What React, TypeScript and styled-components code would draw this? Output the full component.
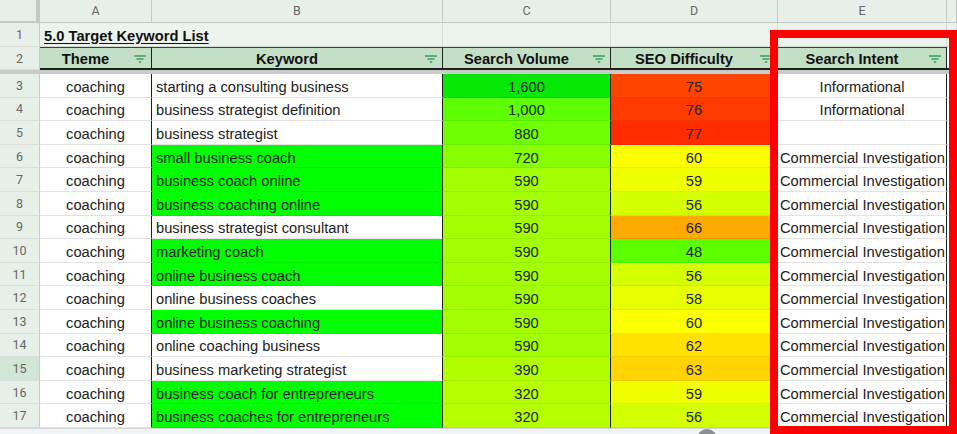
import React from 'react';
import styled, { createGlobalStyle } from 'styled-components';

const GlobalStyle = createGlobalStyle`
  html, body { margin: 0; padding: 0; background: #fff; }
  body { width: 957px; height: 434px; overflow: hidden; font-family: "Liberation Sans", Arial, sans-serif; }
  #root { width: 957px; height: 434px; }
`;

const COLS = '40px 112px 291px 168px 167px 169px 1fr';
const HEAD_BG = '#e7f0e8';
const HEAD_LINE = '#c5cec6';
const DARK = '#1f1f1f';

const Sheet = styled.div`
  position: relative;
  width: 957px;
  height: 434px;
  overflow: hidden;
  background: #fff;
  display: flex;
  flex-direction: column;
`;

const Row = styled.div<{ $h: number }>`
  display: grid;
  grid-template-columns: ${COLS};
  height: ${(p) => p.$h}px;
  flex: none;
`;

const Corner = styled.div`
  background: ${HEAD_BG};
  border-right: 4px solid #c3c8c4;
  border-bottom: 2px solid #c3c8c4;
  box-sizing: border-box;
`;

const ColLetter = styled.div`
  background: ${HEAD_BG};
  border-right: 1px solid ${HEAD_LINE};
  border-bottom: 1px solid #bfc8c0;
  box-sizing: border-box;
  display: flex;
  align-items: center;
  justify-content: center;
  padding-bottom: 2px;
  font-family: Roboto, "Liberation Sans", Arial, sans-serif;
  font-size: 12.5px;
  color: #666;
`;

const RowNum = styled.div<{ $active?: boolean }>`
  background: ${(p) => (p.$active ? '#d1e6d5' : HEAD_BG)};
  border-right: 1px solid ${HEAD_LINE};
  border-bottom: 1px solid #d6ded7;
  box-sizing: border-box;
  display: flex;
  align-items: center;
  justify-content: center;
  font-family: Roboto, "Liberation Sans", Arial, sans-serif;
  font-size: 12.5px;
  color: #666;
`;

const TitleCell = styled.div<{ $span?: number }>`
  grid-column: span ${(p) => p.$span ?? 1};
  background: #ebf3ec;
  border-right: 1px solid #d3dbd4;
  border-bottom: 1px solid #d3dbd4;
  box-sizing: border-box;
  display: flex;
  align-items: center;
  padding: 2px 4px 0;
  font-size: 14.7px;
  font-weight: bold;
  color: #111;
  white-space: nowrap;
`;

const Underlined = styled.span`
  text-decoration: underline;
  text-underline-offset: 2px;
`;

const HeaderCell = styled.div<{ $plain?: boolean }>`
  background: ${(p) => (p.$plain ? '#fff' : '#c3e0c6')};
  border-top: 1px solid ${(p) => (p.$plain ? '#e2e2e2' : '#36443a')};
  border-right: ${(p) => (p.$plain ? '1px solid #e2e2e2' : `1.5px solid ${DARK}`)};
  border-bottom: 2px solid ${DARK};
  box-sizing: border-box;
  display: flex;
  align-items: center;
  padding-top: 2px;
  font-size: 14.7px;
  font-weight: bold;
  color: #111;
`;

const HeaderLabel = styled.span`
  flex: 1;
  text-align: center;
  padding-left: 2px;
  white-space: nowrap;
`;

const FilterSlot = styled.span`
  width: 22px;
  display: flex;
  align-items: center;
  justify-content: center;
  flex: none;
`;

const FrozenBar = styled.div`
  height: 4px;
  flex: none;
  background: #c8ccc9;
`;

const Cell = styled.div<{ $bg?: string; $align?: 'left' | 'center'; $dark?: boolean; $pad?: number }>`
  background: ${(p) => p.$bg ?? '#fff'};
  border-right: 1px solid ${(p) => (p.$dark ? DARK : '#e2e2e2')};
  border-bottom: 1px solid ${(p) => (p.$bg ? 'rgba(0,0,0,0.07)' : '#e2e2e2')};
  box-sizing: border-box;
  display: flex;
  align-items: center;
  justify-content: ${(p) => (p.$align === 'left' ? 'flex-start' : 'center')};
  padding: 3px 2px 0 ${(p) => p.$pad ?? 2}px;
  font-size: 14.7px;
  color: #222;
  white-space: nowrap;
  overflow: hidden;
`;

const BottomBar = styled.div`
  flex: 1;
  background: #f1f3f4;
  border-top: 1px solid #d5d8db;
`;

const RedFrame = styled.div`
  position: absolute;
  left: 770px;
  top: 30px;
  width: 187px;
  height: 404px;
  box-sizing: border-box;
  border: 8px solid #ff0000;
  pointer-events: none;
`;

const DockPeek = styled.svg`
  position: absolute;
  left: 690px;
  top: 428px;
`;

const FilterIcon = () => (
  <svg width="12" height="8" viewBox="0 0 12 8">
    <path d="M0 1h12M2.5 4h7M4.8 7h2.4" stroke="#3a9e5e" strokeWidth="1.3" fill="none" />
  </svg>
);

type DataRow = {
  n: number;
  kw: string;
  kwGreen: boolean;
  vol: string;
  volBg: string;
  seo: string;
  seoBg: string;
  intent: 'Informational' | 'Commercial Investigation' | '';
};

const CI = 'Commercial Investigation' as const;

const rows: DataRow[] = [
  { n: 3, kw: 'starting a consulting business', kwGreen: false, vol: '1,600', volBg: '#06e806', seo: '75', seoBg: '#ff4400', intent: 'Informational' },
  { n: 4, kw: 'business strategist definition', kwGreen: false, vol: '1,000', volBg: '#5eff00', seo: '76', seoBg: '#ff3a00', intent: 'Informational' },
  { n: 5, kw: 'business strategist', kwGreen: false, vol: '880', volBg: '#6eff00', seo: '77', seoBg: '#ff2c00', intent: '' },
  { n: 6, kw: 'small business coach', kwGreen: true, vol: '720', volBg: '#88ff00', seo: '60', seoBg: '#fbff00', intent: CI },
  { n: 7, kw: 'business coach online', kwGreen: true, vol: '590', volBg: '#a3ff00', seo: '59', seoBg: '#f0ff00', intent: CI },
  { n: 8, kw: 'business coaching online', kwGreen: true, vol: '590', volBg: '#a3ff00', seo: '56', seoBg: '#d4ff00', intent: CI },
  { n: 9, kw: 'business strategist consultant', kwGreen: false, vol: '590', volBg: '#a3ff00', seo: '66', seoBg: '#ffaa00', intent: CI },
  { n: 10, kw: 'marketing coach', kwGreen: true, vol: '590', volBg: '#a3ff00', seo: '48', seoBg: '#5cff00', intent: CI },
  { n: 11, kw: 'online business coach', kwGreen: true, vol: '590', volBg: '#a3ff00', seo: '56', seoBg: '#d4ff00', intent: CI },
  { n: 12, kw: 'online business coaches', kwGreen: false, vol: '590', volBg: '#a3ff00', seo: '58', seoBg: '#e8ff00', intent: CI },
  { n: 13, kw: 'online business coaching', kwGreen: true, vol: '590', volBg: '#a3ff00', seo: '60', seoBg: '#fbff00', intent: CI },
  { n: 14, kw: 'online coaching business', kwGreen: false, vol: '590', volBg: '#a3ff00', seo: '62', seoBg: '#ffe200', intent: CI },
  { n: 15, kw: 'business marketing strategist', kwGreen: false, vol: '390', volBg: '#b0ff00', seo: '63', seoBg: '#ffd400', intent: CI },
  { n: 16, kw: 'business coach for entrepreneurs', kwGreen: true, vol: '320', volBg: '#b5ff00', seo: '59', seoBg: '#f0ff00', intent: CI },
  { n: 17, kw: 'business coaches for entrepreneurs', kwGreen: true, vol: '320', volBg: '#b5ff00', seo: '56', seoBg: '#d4ff00', intent: CI },
];

const headers = ['Theme', 'Keyword', 'Search Volume', 'SEO Difficulty', 'Search Intent'];

export default function App() {
  return (
    <>
      <GlobalStyle />
      <Sheet>
        <Row $h={23}>
          <Corner />
          {['A', 'B', 'C', 'D', 'E', ''].map((l, i) => (
            <ColLetter key={i}>{l}</ColLetter>
          ))}
        </Row>
        <Row $h={24}>
          <RowNum>1</RowNum>
          <TitleCell $span={2}>
            <Underlined>5.0 Target Keyword List</Underlined>
          </TitleCell>
          <TitleCell />
          <TitleCell />
          <TitleCell />
          <TitleCell />
        </Row>
        <Row $h={23}>
          <RowNum>2</RowNum>
          {headers.map((h) => (
            <HeaderCell key={h}>
              <HeaderLabel>{h}</HeaderLabel>
              <FilterSlot>
                <FilterIcon />
              </FilterSlot>
            </HeaderCell>
          ))}
          <HeaderCell $plain />
        </Row>
        <FrozenBar />
        {rows.map((r) => (
          <Row $h={23.6} key={r.n}>
            <RowNum $active={r.n === 15}>{r.n}</RowNum>
            <Cell $dark>coaching</Cell>
            <Cell $dark $align="left" $pad={4} $bg={r.kwGreen ? '#00ff00' : undefined}>
              {r.kw}
            </Cell>
            <Cell $dark $bg={r.volBg}>{r.vol}</Cell>
            <Cell $dark $bg={r.seoBg}>{r.seo}</Cell>
            <Cell $dark $align={r.intent === CI ? 'left' : 'center'}>
              {r.intent}
            </Cell>
            <Cell />
          </Row>
        ))}
        <BottomBar />
        <DockPeek width="240" height="6" viewBox="0 0 240 6">
          <circle cx="17" cy="11" r="10" fill="#8a8d90" />
        </DockPeek>
        <RedFrame />
      </Sheet>
    </>
  );
}
